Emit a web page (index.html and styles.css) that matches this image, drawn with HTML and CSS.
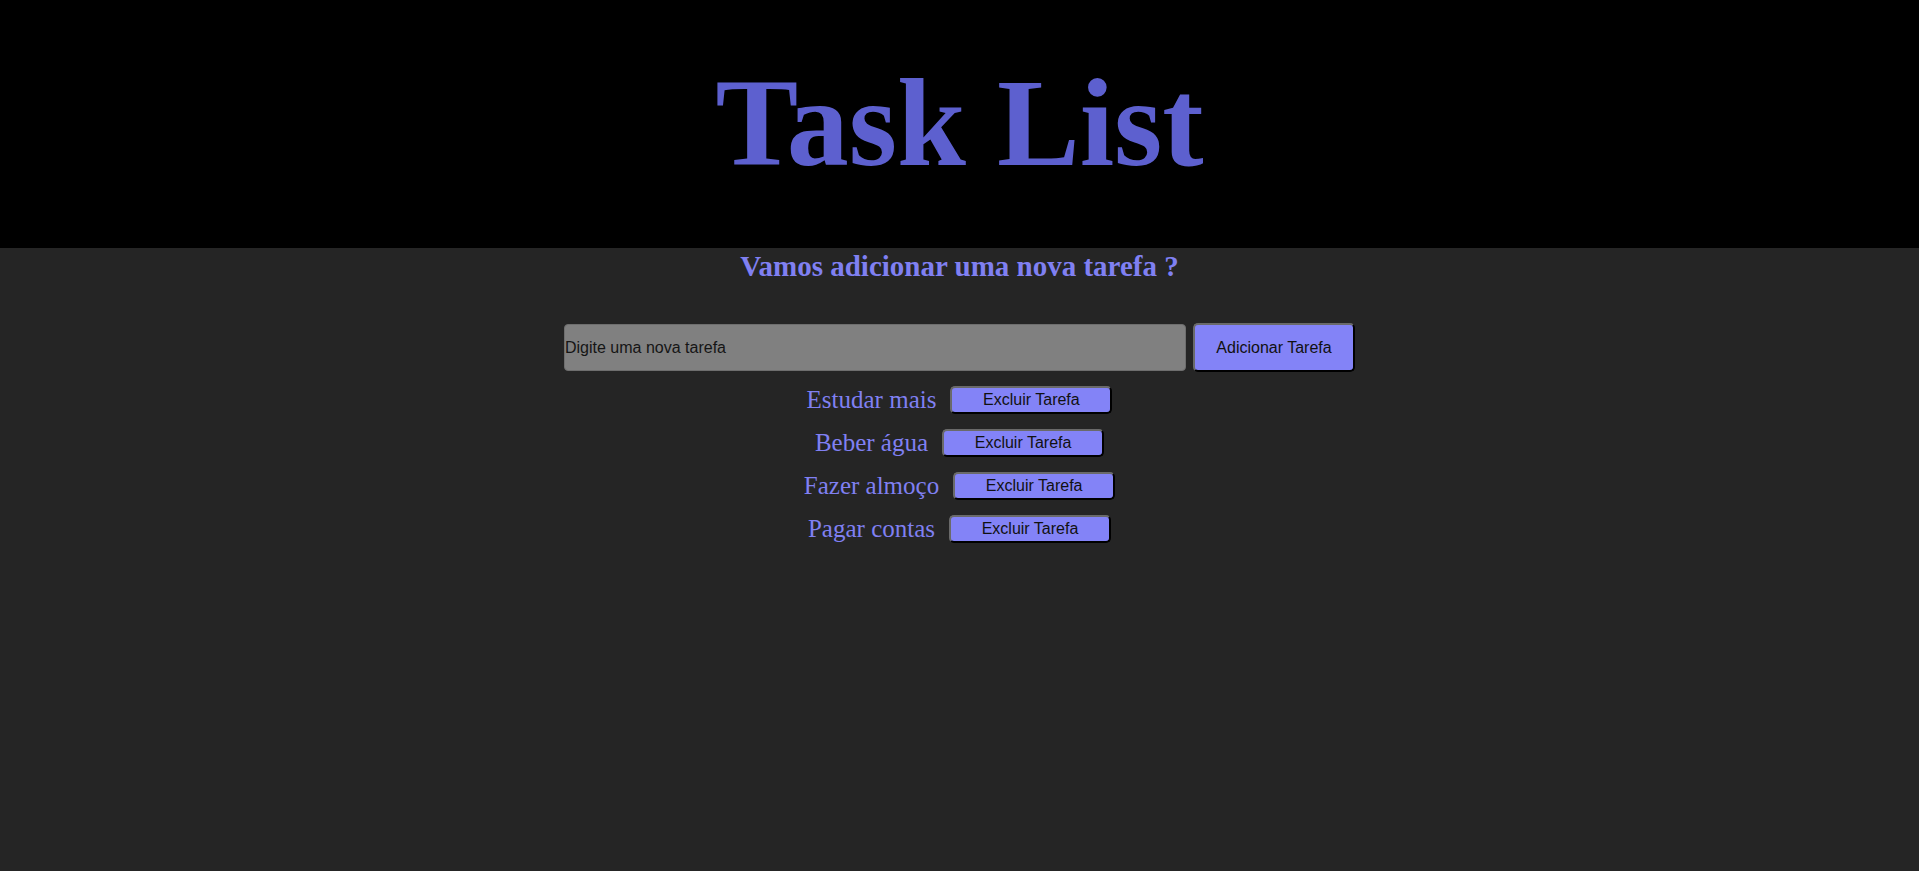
FILE: index.html
```html
<!DOCTYPE html>
<html lang="pt-BR">
<head>
<meta charset="utf-8">
<title>Task List</title>
<link rel="stylesheet" href="styles.css">
</head>
<body>
<header class="header">
  <h1 class="title">Task List</h1>
</header>
<main class="main">
  <h2 class="subtitle">Vamos adicionar uma nova tarefa ?</h2>
  <form class="add-form">
    <input class="task-input" type="text" placeholder="Digite uma nova tarefa">
    <button class="btn btn-add" type="button">Adicionar Tarefa</button>
  </form>
  <ul class="task-list">
    <li class="task"><span class="task-name">Estudar mais</span><button class="btn btn-del" type="button">Excluir Tarefa</button></li>
    <li class="task"><span class="task-name">Beber água</span><button class="btn btn-del" type="button">Excluir Tarefa</button></li>
    <li class="task"><span class="task-name">Fazer almoço</span><button class="btn btn-del" type="button">Excluir Tarefa</button></li>
    <li class="task"><span class="task-name">Pagar contas</span><button class="btn btn-del" type="button">Excluir Tarefa</button></li>
  </ul>
</main>
</body>
</html>
```

FILE: styles.css
```css
html, body {
  margin: 0;
  padding: 0;
}
body {
  background: #252525;
  font-family: "Liberation Serif", "Times New Roman", serif;
  min-height: 871px;
}
.header {
  background: #000;
  height: 248px;
  box-sizing: border-box;
  padding-top: 53px;
  display: flex;
  justify-content: center;
}
.title {
  margin: 0;
  font-size: 124px;
  font-weight: bold;
  line-height: normal;
  color: #5d60cf;
}
.main {
  display: flex;
  flex-direction: column;
  align-items: center;
}
.subtitle {
  margin: 2px 0 0;
  font-size: 29px;
  font-weight: bold;
  line-height: normal;
  color: #8080f2;
}
.add-form {
  margin-top: 40px;
  display: flex;
  align-items: center;
  gap: 7px;
}
.task-input {
  width: 622px;
  height: 47px;
  box-sizing: border-box;
  background: #808080;
  border: 1px solid #6e6e6e;
  border-radius: 4px;
  padding: 0;
  font-family: "Liberation Sans", Arial, sans-serif;
  font-size: 16px;
  color: #111;
}
.task-input::placeholder {
  color: #151515;
  opacity: 1;
}
.btn {
  background: #8383f7;
  border: 2px solid;
  border-color: #6a6a6a #000 #000 #6a6a6a;
  border-radius: 5px;
  font-family: "Liberation Sans", Arial, sans-serif;
  font-size: 16px;
  color: #111;
  box-sizing: border-box;
  width: 162px;
  padding: 0;
}
.btn-add {
  height: 49px;
}
.btn-del {
  height: 28px;
}
.task-list {
  list-style: none;
  margin: 14px 0 0;
  padding: 0;
  display: flex;
  flex-direction: column;
  align-items: center;
  gap: 15px;
}
.task {
  display: flex;
  align-items: center;
  gap: 14px;
  height: 28px;
}
.task-name {
  font-size: 25px;
  color: #8080f2;
  line-height: 28px;
}
```
